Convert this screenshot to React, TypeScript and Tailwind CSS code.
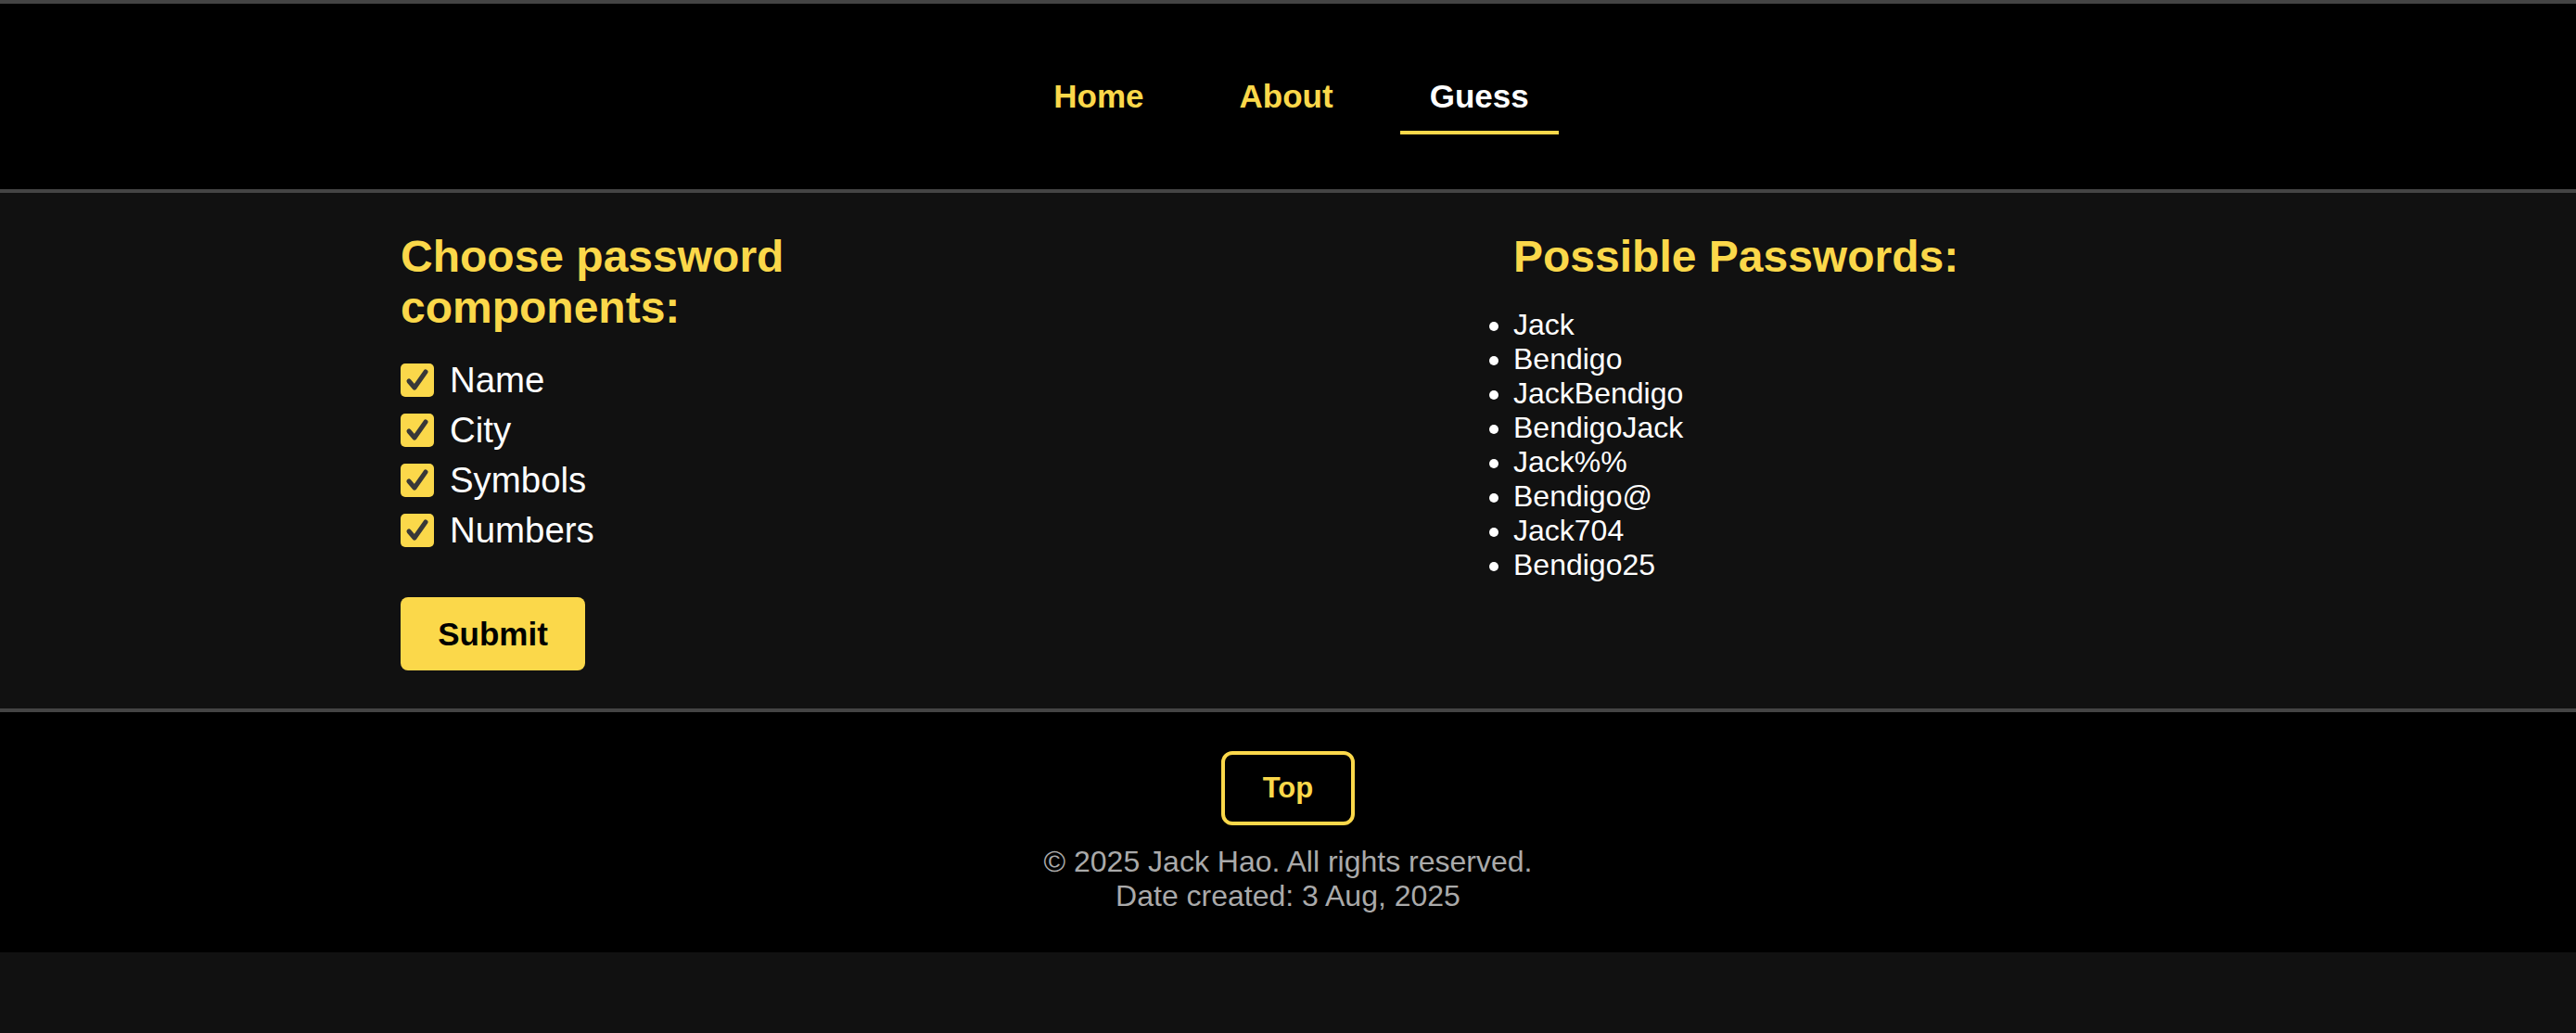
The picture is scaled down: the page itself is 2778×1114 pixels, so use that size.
export default function App() {
  const items = ["Name", "City", "Symbols", "Numbers"];
  const pw = ["Jack", "Bendigo", "JackBendigo", "BendigoJack", "Jack%%", "Bendigo@", "Jack704", "Bendigo25"];
  return (
    <div className="min-h-[1114px] bg-[#111111] font-['Liberation_Sans',Arial,sans-serif]">
      <header className="border-t-4 border-b-4 border-[#444444] bg-black pt-[63px] pb-[59px]">
        <nav className="flex justify-center gap-[41px] pl-[8px]">
          <a className="px-[31px] py-[17px] border-b-4 border-transparent text-[35px] leading-[40px] font-bold text-[#fbd84a]">Home</a>
          <a className="px-[31px] py-[17px] border-b-4 border-transparent text-[35px] leading-[40px] font-bold text-[#fbd84a]">About</a>
          <a className="px-[32px] py-[17px] border-b-4 border-[#fbd84a] text-[35px] leading-[40px] font-bold text-white">Guess</a>
        </nav>
      </header>

      <main className="border-b-4 border-[#444444] py-[41px] pl-[432px] grid grid-cols-[1200px_1fr]">
        <div>
          <h2 className="max-w-[560px] text-[48px] leading-[55px] font-bold text-[#fbd84a]">
            Choose password components:
          </h2>
          <div className="mt-[29px] flex flex-col gap-[10px]">
            {items.map((it) => (
              <label key={it} className="flex h-[44px] items-center gap-[17px]">
                <span className="flex h-[36px] w-[36px] items-center justify-center rounded-[5px] bg-[#fbd84a]">
                  <svg width="28" height="28" viewBox="0 0 28 28">
                    <path d="M5 15 L11 22 L23 5" fill="none" stroke="#383838" strokeWidth="5" strokeLinecap="round" strokeLinejoin="round" />
                  </svg>
                </span>
                <span className="text-[38.4px] leading-[44px] text-white">{it}</span>
              </label>
            ))}
          </div>
          <button className="mt-[50px] h-[79px] w-[199px] rounded-[8px] bg-[#fbd84a] text-[35px] leading-[40px] font-bold text-black">
            Submit
          </button>
        </div>
        <div>
          <h2 className="text-[48px] leading-[55px] font-bold text-[#fbd84a]">Possible Passwords:</h2>
          <ul className="mt-[28px] list-disc pl-0">
            {pw.map((p) => (
              <li key={p} className="text-[32px] leading-[37px] text-white">{p}</li>
            ))}
          </ul>
        </div>
      </main>

      <footer className="bg-black pt-[42px] pb-[42px] flex flex-col items-center">
        <button className="rounded-[12px] border-4 border-[#fbd84a] px-[41px] py-[18px] text-[31px] leading-[36px] font-bold text-[#fbd84a]">
          Top
        </button>
        <div className="mt-[21px] text-center text-[32px] leading-[37px] text-[#aaaaaa]">
          <p>© 2025 Jack Hao. All rights reserved.</p>
          <p>Date created: 3 Aug, 2025</p>
        </div>
      </footer>
    </div>
  );
}
